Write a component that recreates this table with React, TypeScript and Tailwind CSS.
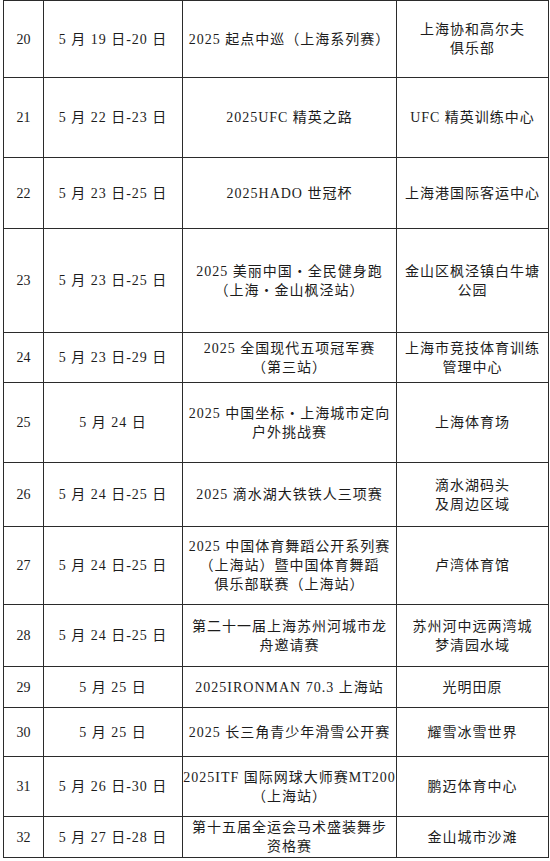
const rows: { no: string; date: string; name: string[]; place: string[]; h: number }[] = [
  { no: '20', date: '5 月 19 日-20 日', name: ['2025 起点中巡（上海系列赛）'], place: ['上海协和高尔夫', '俱乐部'], h: 77 },
  { no: '21', date: '5 月 22 日-23 日', name: ['2025UFC 精英之路'], place: ['UFC 精英训练中心'], h: 80 },
  { no: '22', date: '5 月 23 日-25 日', name: ['2025HADO 世冠杯'], place: ['上海港国际客运中心'], h: 71 },
  { no: '23', date: '5 月 23 日-25 日', name: ['2025 美丽中国・全民健身跑', '（上海・金山枫泾站）'], place: ['金山区枫泾镇白牛塘', '公园'], h: 104 },
  { no: '24', date: '5 月 23 日-29 日', name: ['2025 全国现代五项冠军赛', '（第三站）'], place: ['上海市竞技体育训练', '管理中心'], h: 50 },
  { no: '25', date: '5 月 24 日', name: ['2025 中国坐标・上海城市定向', '户外挑战赛'], place: ['上海体育场'], h: 80 },
  { no: '26', date: '5 月 24 日-25 日', name: ['2025 滴水湖大铁铁人三项赛'], place: ['滴水湖码头', '及周边区域'], h: 64 },
  { no: '27', date: '5 月 24 日-25 日', name: ['2025 中国体育舞蹈公开系列赛', '（上海站）暨中国体育舞蹈', '俱乐部联赛（上海站）'], place: ['卢湾体育馆'], h: 78 },
  { no: '28', date: '5 月 24 日-25 日', name: ['第二十一届上海苏州河城市龙', '舟邀请赛'], place: ['苏州河中远两湾城', '梦清园水域'], h: 62 },
  { no: '29', date: '5 月 25 日', name: ['2025IRONMAN 70.3 上海站'], place: ['光明田原'], h: 41 },
  { no: '30', date: '5 月 25 日', name: ['2025 长三角青少年滑雪公开赛'], place: ['耀雪冰雪世界'], h: 49 },
  { no: '31', date: '5 月 26 日-30 日', name: ['2025ITF 国际网球大师赛MT200', '（上海站）'], place: ['鹏迈体育中心'], h: 60 },
  { no: '32', date: '5 月 27 日-28 日', name: ['第十五届全运会马术盛装舞步', '资格赛'], place: ['金山城市沙滩'], h: 41 },
]

function Lines({ lines }: { lines: string[] }) {
  return (
    <div className="flex flex-col items-center">
      {lines.map((l, i) => (
        <span key={i} className="whitespace-nowrap">
          {l}
        </span>
      ))}
    </div>
  )
}

export default function App() {
  return (
    <div className="min-h-[861px] bg-white pl-[3px]">
      <table
        className="w-[545px] table-fixed border-collapse text-center text-[14px] leading-[19px] tracking-[1px] text-[#1c1c1c]"
        style={{ fontFamily: '"Liberation Serif", "Noto Sans CJK SC", serif' }}
      >
        <colgroup>
          <col className="w-[40px]" />
          <col className="w-[139px]" />
          <col className="w-[214px]" />
          <col className="w-[152px]" />
        </colgroup>
        <tbody>
          {rows.map((r) => (
            <tr key={r.no} style={{ height: r.h }}>
              <td className="border-[1.5px] border-[#2b2b2b] p-0 tracking-normal">{r.no}</td>
              <td className="border-[1.5px] border-[#2b2b2b] p-0 whitespace-pre">{r.date}</td>
              <td className="border-[1.5px] border-[#2b2b2b] p-0">
                <Lines lines={r.name} />
              </td>
              <td className="border-[1.5px] border-[#2b2b2b] p-0">
                <Lines lines={r.place} />
              </td>
            </tr>
          ))}
        </tbody>
      </table>
    </div>
  )
}
